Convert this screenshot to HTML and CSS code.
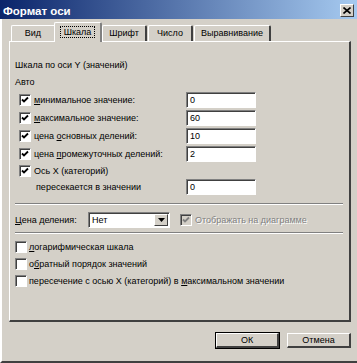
FILE: index.html
```html
<!DOCTYPE html>
<html lang="ru">
<head>
    <meta charset="UTF-8">
    <title>Формат оси</title>
    <link rel="stylesheet" href="styles.css">
</head>
<body>
    <div class="window">
        <div class="titlebar">
            <span class="title">Формат оси</span>
            <span class="close">
                <svg width="8" height="7" viewBox="0 0 8 7"><path d="M0.5 0.5 L7.5 6.5 M7.5 0.5 L0.5 6.5" stroke="#000" stroke-width="1.6" fill="none"/></svg>
            </span>
        </div>

        <div class="content">
            <div class="tabs">
                <div class="tab tab-view">Вид</div>
                <div class="tab tab-scale active"><span class="focus">Шкала</span></div>
                <div class="tab tab-font">Шрифт</div>
                <div class="tab tab-number">Число</div>
                <div class="tab tab-align">Выравнивание</div>
            </div>

            <div class="panel">
                <div class="heading">Шкала по оси Y (значений)</div>
                <div class="heading">Авто</div>

                <div class="auto-grid">
                    <span class="check checked"><svg width="8" height="8" viewBox="0 0 8 8"><path d="M1 3.5 L3 5.5 L7 1.5" stroke="#000" stroke-width="1.8" fill="none"/></svg></span>
                    <span class="label"><u>м</u>инимальное значение:</span>
                    <span class="field">0</span>

                    <span class="check checked"><svg width="8" height="8" viewBox="0 0 8 8"><path d="M1 3.5 L3 5.5 L7 1.5" stroke="#000" stroke-width="1.8" fill="none"/></svg></span>
                    <span class="label"><u>м</u>аксимальное значение:</span>
                    <span class="field">60</span>

                    <span class="check checked"><svg width="8" height="8" viewBox="0 0 8 8"><path d="M1 3.5 L3 5.5 L7 1.5" stroke="#000" stroke-width="1.8" fill="none"/></svg></span>
                    <span class="label">цена <u>о</u>сновных делений:</span>
                    <span class="field">10</span>

                    <span class="check checked"><svg width="8" height="8" viewBox="0 0 8 8"><path d="M1 3.5 L3 5.5 L7 1.5" stroke="#000" stroke-width="1.8" fill="none"/></svg></span>
                    <span class="label">цена <u>п</u>ромежуточных делений:</span>
                    <span class="field">2</span>

                    <span class="check checked"><svg width="8" height="8" viewBox="0 0 8 8"><path d="M1 3.5 L3 5.5 L7 1.5" stroke="#000" stroke-width="1.8" fill="none"/></svg></span>
                    <span class="label wide">Ось X (категорий)</span>

                    <span class="label indent">пересекается в значении</span>
                    <span class="field">0</span>
                </div>

                <div class="sep sep-top"></div>

                <div class="tick-row">
                    <span class="tick-label"><u>Ц</u>ена деления:</span>
                    <span class="select">
                        <span class="select-value">Нет</span>
                        <span class="select-btn"><svg width="7" height="4" viewBox="0 0 7 4"><path d="M0 0 H7 L3.5 4 Z" fill="#000"/></svg></span>
                    </span>
                    <span class="check checked disabled"><svg width="8" height="8" viewBox="0 0 8 8"><path d="M1 3.5 L3 5.5 L7 1.5" stroke="#808080" stroke-width="1.8" fill="none"/></svg></span>
                    <span class="disabled-text">Отображать на диаграмме</span>
                </div>

                <div class="sep sep-bottom"></div>

                <div class="option"><span class="check"></span><span><u>л</u>огарифмическая шкала</span></div>
                <div class="option"><span class="check"></span><span>о<u>б</u>ратный порядок значений</span></div>
                <div class="option"><span class="check"></span><span>пересечение с осью X (категорий) в <u>м</u>аксимальном значении</span></div>
            </div>

            <div class="buttons">
                <span class="btn default">ОК</span>
                <span class="btn">Отмена</span>
            </div>
        </div>
    </div>
</body>
</html>
```

FILE: styles.css
```css
body {
    margin: 0;
    padding: 0;
    background: #d4d0c8;
    font-family: 'Liberation Sans', Arial, sans-serif;
    font-size: 9px;
    color: #000;
}

.window {
    width: 357px;
    height: 363px;
    box-sizing: border-box;
    background: #d4d0c8;
    border-left: 2px solid #fff;
    border-bottom: 2px solid #404040;
    display: flex;
    flex-direction: column;
}

.titlebar {
    height: 19px;
    margin-left: -2px;
    background: linear-gradient(to right, #0a246a, #a6caf0);
    display: flex;
    align-items: center;
    justify-content: space-between;
    padding: 0 3px 0 3px;
}

.title {
    color: #fff;
    font-weight: bold;
    font-size: 11.5px;
    padding-top: 2px;
}

.close {
    width: 14px;
    height: 13px;
    box-sizing: border-box;
    background: #d4d0c8;
    border-top: 1px solid #fff;
    border-left: 1px solid #fff;
    border-right: 1px solid #404040;
    border-bottom: 1px solid #404040;
    display: flex;
    align-items: center;
    justify-content: center;
    margin-top: 2px;
}

.content {
    flex: 1;
    padding: 3px 6px 0 7px;
    display: flex;
    flex-direction: column;
}

/* вкладки */
.tabs {
    display: flex;
    align-items: flex-end;
    padding-left: 2px;
    height: 19px;
}

.tab {
    height: 16px;
    box-sizing: border-box;
    text-align: center;
    line-height: 15px;
    border-top: 1px solid #fff;
    border-left: 1px solid #fff;
    border-right: 2px solid #404040;
    border-radius: 2px 2px 0 0;
}

.tab-view { width: 45px; }
.tab-font { width: 45px; margin-left: 2px; }
.tab-number { width: 45px; margin-left: 1px; }
.tab-align { width: 77px; margin-left: 1px; }

.tab.active {
    width: 48px;
    height: 20px;
    margin: 0 -2px -1px -2px;
    background: #d4d0c8;
    position: relative;
    z-index: 1;
    line-height: 18px;
    border-right-color: #808080;
}

.focus {
    border: 1px dotted #000;
    padding: 0 3px;
}

.panel {
    height: 281px;
    box-sizing: border-box;
    border-top: 1px solid #fff;
    border-left: 1px solid #fff;
    border-right: 2px solid #404040;
    border-bottom: 2px solid #404040;
    padding: 15px 6px 0 5px;
}

.heading {
    height: 17px;
    line-height: 17px;
}

.auto-grid {
    display: grid;
    grid-template-columns: 12px 149px 70px;
    grid-template-rows: 18px 18px 18px 18px 15px 18px;
    column-gap: 3px;
    align-items: center;
    padding-left: 4px;
}

.label.wide {
    grid-column: 2 / 4;
}

.label.indent {
    grid-column: 2;
    padding-left: 2px;
}

.check {
    width: 12px;
    height: 12px;
    box-sizing: border-box;
    background: #fff;
    border-top: 1px solid #808080;
    border-left: 1px solid #808080;
    border-right: 1px solid #fff;
    border-bottom: 1px solid #fff;
    box-shadow: inset 1px 1px 0 #404040;
    display: flex;
    align-items: center;
    justify-content: center;
    flex-shrink: 0;
}

.check.disabled {
    background: #d4d0c8;
}

.field {
    height: 16px;
    box-sizing: border-box;
    background: #fff;
    border-top: 1px solid #808080;
    border-left: 1px solid #808080;
    border-right: 1px solid #fff;
    border-bottom: 1px solid #fff;
    box-shadow: inset 1px 1px 0 #404040;
    padding-left: 3px;
    line-height: 14px;
}

.sep {
    height: 0;
    border-top: 1px solid #808080;
    border-bottom: 1px solid #fff;
}

.sep-top {
    margin: 7px 0 6px 0;
}

.sep-bottom {
    margin: 3px 0 4px 0;
}

.tick-row {
    display: flex;
    align-items: center;
    height: 18px;
}

.tick-label {
    width: 73px;
}

.select {
    width: 82px;
    height: 16px;
    box-sizing: border-box;
    background: #fff;
    border-top: 1px solid #808080;
    border-left: 1px solid #808080;
    border-right: 1px solid #fff;
    border-bottom: 1px solid #fff;
    box-shadow: inset 1px 1px 0 #404040;
    display: flex;
    align-items: center;
    justify-content: space-between;
    margin-right: 10px;
}

.select-value {
    padding-left: 3px;
}

.select-btn {
    width: 14px;
    height: 12px;
    box-sizing: border-box;
    margin-right: 1px;
    background: #d4d0c8;
    border-top: 1px solid #fff;
    border-left: 1px solid #fff;
    border-right: 1px solid #404040;
    border-bottom: 1px solid #404040;
    display: flex;
    align-items: center;
    justify-content: center;
}

.disabled-text {
    color: #808080;
    margin-left: 3px;
    text-shadow: 1px 1px 0 #fff;
}

.option {
    display: flex;
    align-items: center;
    gap: 2px;
    height: 17px;
}

.buttons {
    display: flex;
    justify-content: flex-end;
    gap: 8px;
    padding-top: 11px;
}

.btn {
    width: 64px;
    height: 15px;
    box-sizing: border-box;
    text-align: center;
    line-height: 12px;
    border-top: 1px solid #fff;
    border-left: 1px solid #fff;
    border-right: 2px solid #404040;
    border-bottom: 2px solid #404040;
}

.btn.default {
    width: 63px;
    outline: 1px solid #000;
}
```
